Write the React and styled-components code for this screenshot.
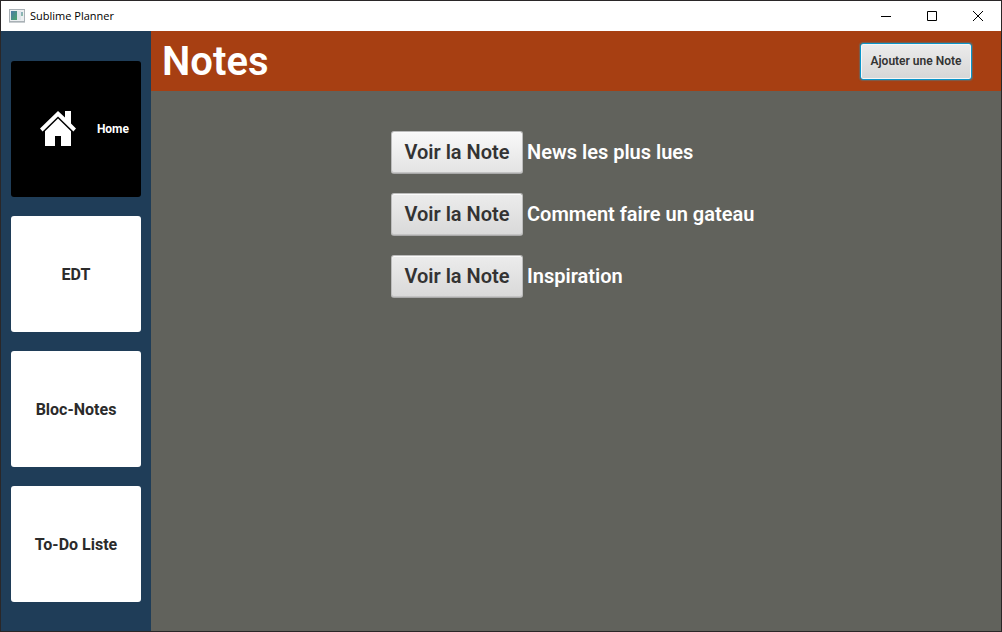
import React from "react";
import styled, { createGlobalStyle, css } from "styled-components";

const GlobalStyle = createGlobalStyle`
  *, *::before, *::after { box-sizing: border-box; }
  body { margin: 0; }
  button { font: inherit; margin: 0; cursor: pointer; }
  h1, ul { margin: 0; padding: 0; }
`;

const Window = styled.div`
  display: flex;
  flex-direction: column;
  min-height: 100vh;
  border: 1px solid #2a2728;
  background: #61625c;
  font-family: Roboto, "Liberation Sans", sans-serif;
`;

const TitleBar = styled.div`
  display: flex;
  align-items: center;
  height: 30px;
  padding-left: 8px;
  background: #fff;
  color: #000;
`;

const WindowTitle = styled.span`
  flex: 1;
  padding-left: 5px;
  font-family: "Open Sans", "Noto Sans", sans-serif;
  font-size: 11px;
  line-height: 16px;
`;

const WindowButton = styled.button`
  display: flex;
  align-items: center;
  justify-content: center;
  width: 46px;
  height: 30px;
  padding: 0;
  border: 0;
  background: transparent;
  color: #000;
`;

const Body = styled.div`
  display: flex;
  flex: 1;
`;

const Sidebar = styled.nav`
  display: flex;
  flex-direction: column;
  gap: 19px;
  width: 150px;
  padding: 30px 10px 29px;
  background: #1f3d58;
`;

const NavButton = styled.button`
  height: 116px;
  padding: 2px 0 0;
  border: 0;
  border-radius: 3px;
  background: #fff;
  color: #2b2b2b;
  font-size: 16px;
  font-weight: 700;
  line-height: 20px;

  ${({ $home }) =>
    $home &&
    css`
      display: flex;
      align-items: center;
      justify-content: flex-end;
      gap: 21px;
      height: 136px;
      padding: 0 12px 0 0;
      background: #000;
      color: #fff;
      font-size: 12px;
    `}
`;

const Main = styled.main`
  display: flex;
  flex: 1;
  flex-direction: column;
`;

const Header = styled.header`
  display: flex;
  align-items: center;
  justify-content: space-between;
  height: 60px;
  padding: 0 29px 0 11px;
  background: #a73f12;
`;

const Heading = styled.h1`
  padding-top: 2px;
  color: #fff;
  font-size: 40px;
  font-weight: 600;
  line-height: 48px;
`;

const AddButton = styled.button`
  width: 112px;
  height: 37px;
  padding: 0;
  border: 1px solid #0b95c9;
  border-radius: 3px;
  background: linear-gradient(#ececec, #d6d6d6);
  box-shadow: 0 0 1px 1px #50809080, inset 0 0 0 1px #f6f6f6;
  color: #333;
  font-size: 12px;
  font-weight: 600;
`;

const NoteList = styled.ul`
  display: flex;
  flex-direction: column;
  gap: 19px;
  width: 370px;
  margin: 40px auto 0;
  list-style: none;
`;

const NoteRow = styled.li`
  display: flex;
  align-items: center;
  gap: 4px;
`;

const ViewButton = styled.button`
  width: 132px;
  height: 43px;
  padding: 0 0 2px;
  border: 1px solid #bcbcbc;
  border-bottom-color: #a9a9a9;
  border-radius: 3px;
  background: linear-gradient(#ececec, #d9d9d9);
  box-shadow: inset 0 1px 0 #fbfbfb, inset 0 -1px 0 #c4c4c4;
  color: #333;
  font-size: 20px;
  font-weight: 600;

  &:hover, ${NoteRow}:first-child & {
    background: linear-gradient(#f9f9f9, #e3e3e3);
  }
`;

const NoteTitle = styled.span`
  padding-bottom: 2px;
  color: #fff;
  font-size: 20px;
  font-weight: 600;
  line-height: 24px;
`;

const AppIcon = () => (
  <svg width="16" height="14" viewBox="0 0 16 14" aria-hidden="true">
    <defs>
      <linearGradient id="pane" x1="0" y1="0" x2="1" y2="1">
        <stop offset="0" stopColor="#4c79a8" />
        <stop offset="1" stopColor="#4ba66b" />
      </linearGradient>
    </defs>
    <rect x="0.5" y="0.5" width="15" height="12" fill="#eceff1" stroke="#a9b1b6" />
    <rect x="2" y="2" width="6" height="9" fill="url(#pane)" />
    <rect x="8" y="2" width="4" height="9" fill="#dfe6ea" />
    <rect x="12" y="3" width="2" height="4" fill="url(#pane)" opacity="0.6" />
    <path d="M0 13.5h16" stroke="#c9ced1" />
  </svg>
);

const HomeIcon = () => (
  <svg width="36" height="37" viewBox="0 0 36 37" fill="#fff" aria-hidden="true">
    <path d="M18 0L25 6.6V0h6v12.6l5 5-2.6 2.9L18 5.6 2.6 20.5 0 17.6z" />
    <path d="M18 7.4l13 12.8V35H21V25h-6v10H5V20.2z" />
  </svg>
);

const navItems = ["EDT", "Bloc-Notes", "To-Do Liste"];
const notes = ["News les plus lues", "Comment faire un gateau", "Inspiration"];
const windowControls = [
  { label: "Réduire", path: "M0 5.5h10" },
  { label: "Agrandir", path: "M.5.5h9v9h-9z" },
  { label: "Fermer", path: "M0 0l10 10M10 0L0 10" },
];

export default function App() {
  return (
    <>
      <GlobalStyle />
      <Window>
        <TitleBar>
          <AppIcon />
          <WindowTitle>Sublime Planner</WindowTitle>
          {windowControls.map(({ label, path }) => (
            <WindowButton key={label} type="button" aria-label={label}>
              <svg width="10" height="10" viewBox="0 0 10 10" fill="none" stroke="currentColor">
                <path d={path} />
              </svg>
            </WindowButton>
          ))}
        </TitleBar>
        <Body>
          <Sidebar>
            <NavButton type="button" $home>
              <HomeIcon />
              Home
            </NavButton>
            {navItems.map((item) => (
              <NavButton key={item} type="button">{item}</NavButton>
            ))}
          </Sidebar>
          <Main>
            <Header>
              <Heading>Notes</Heading>
              <AddButton type="button">Ajouter une Note</AddButton>
            </Header>
            <NoteList>
              {notes.map((note) => (
                <NoteRow key={note}>
                  <ViewButton type="button">Voir la Note</ViewButton>
                  <NoteTitle>{note}</NoteTitle>
                </NoteRow>
              ))}
            </NoteList>
          </Main>
        </Body>
      </Window>
    </>
  );
}
